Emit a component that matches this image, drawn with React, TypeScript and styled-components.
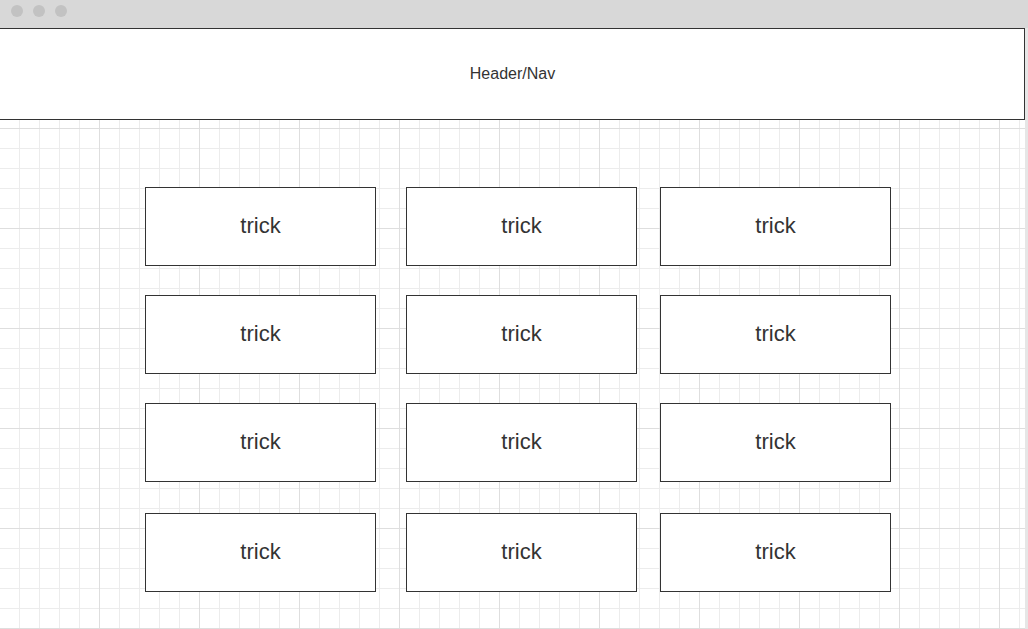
import React from 'react';
import styled, { createGlobalStyle } from 'styled-components';

const GlobalStyle = createGlobalStyle`
  html, body {
    margin: 0;
    padding: 0;
    background: #ffffff;
    overflow: hidden;
  }
  body {
    font-family: "Liberation Sans", Arial, sans-serif;
    color: #333333;
  }
`;

const Window = styled.div`
  width: 1028px;
  height: 629px;
  display: flex;
  flex-direction: column;
  overflow: hidden;
`;

const TitleBar = styled.div`
  height: 28px;
  flex-shrink: 0;
  background: #d8d8d8;
  display: flex;
  align-items: flex-start;
  gap: 10px;
  padding: 5px 0 0 11px;
  box-sizing: border-box;
`;

const Dot = styled.span`
  width: 12px;
  height: 12px;
  border-radius: 50%;
  background: #c2c2c2;
`;

const Canvas = styled.div`
  flex: 1;
  display: flex;
  flex-direction: column;
  background-color: #ffffff;
  background-image:
    linear-gradient(to right, #dedede 1px, transparent 1px),
    linear-gradient(to bottom, #dedede 1px, transparent 1px),
    linear-gradient(to right, #ececec 1px, transparent 1px),
    linear-gradient(to bottom, #ececec 1px, transparent 1px);
  background-size: 100px 100px, 100px 100px, 20px 20px, 20px 20px;
  background-position: 99px 0, 0 0, 19px 0, 0 0;
  border-right: 3px solid #e6e6e6;
  box-sizing: border-box;
`;

const Header = styled.header`
  width: 1025px;
  height: 92px;
  flex-shrink: 0;
  box-sizing: border-box;
  border: 1px solid #333333;
  border-left: none;
  background: #ffffff;
  display: flex;
  align-items: center;
  justify-content: center;
  font-size: 16px;
  padding-left: 1px;
`;

const TrickGrid = styled.div`
  display: grid;
  grid-template-columns: 261px 254px 231px;
  grid-template-rows: 108px 108px 110px 79px;
  padding: 67px 0 0 145px;
`;

const TrickCard = styled.div`
  width: 231px;
  height: 79px;
  box-sizing: border-box;
  border: 1px solid #333333;
  background: #ffffff;
  display: flex;
  align-items: center;
  justify-content: center;
  font-size: 22px;
  padding-bottom: 2px;
`;

const tricks = Array.from({ length: 12 }, (_, i) => ({ id: i, label: 'trick' }));

export default function App() {
  return (
    <>
      <GlobalStyle />
      <Window>
        <TitleBar>
          <Dot />
          <Dot />
          <Dot />
        </TitleBar>
        <Canvas>
          <Header>Header/Nav</Header>
          <TrickGrid>
            {tricks.map(t => (
              <TrickCard key={t.id}>{t.label}</TrickCard>
            ))}
          </TrickGrid>
        </Canvas>
      </Window>
    </>
  );
}
